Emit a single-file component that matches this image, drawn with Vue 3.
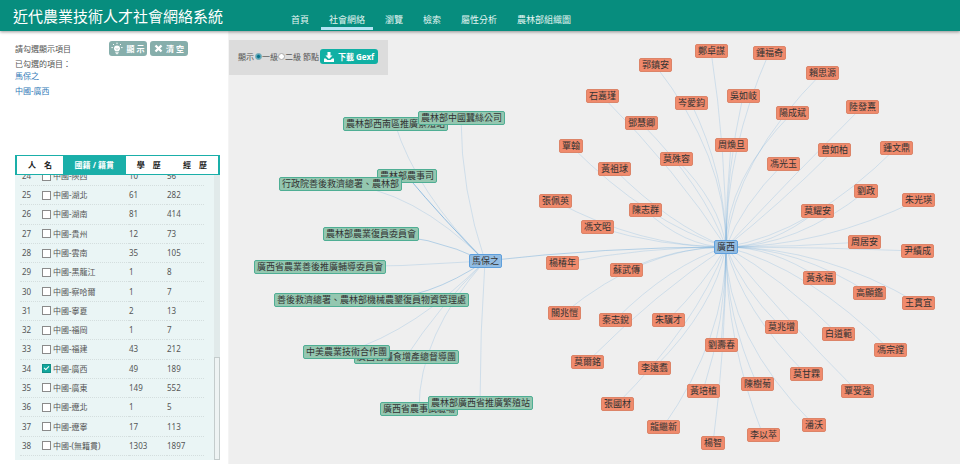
<script setup>
import { ref } from 'vue'

const navItems = ['首頁', '社會網絡', '瀏覽', '檢索', '屬性分析', '農林部組織圖']
const activeNav = ref('社會網絡')

const tabs = ['人　名', '國籍 / 籍貫', '學　歷', '經　歷']
const activeTab = ref('國籍 / 籍貫')

const level = ref('1')
const chosen = ref(['馬保之', '中國-廣西'])

const rows = ref([
  [24, '中國-陝西', 10, 56],
  [25, '中國-湖北', 61, 282],
  [26, '中國-湖南', 81, 414],
  [27, '中國-貴州', 12, 73],
  [28, '中國-雲南', 35, 105],
  [29, '中國-黑龍江', 1, 8],
  [30, '中國-察哈爾', 1, 7],
  [31, '中國-寧夏', 2, 13],
  [32, '中國-福岡', 1, 7],
  [33, '中國-福建', 43, 212],
  [34, '中國-廣西', 49, 189],
  [35, '中國-廣東', 149, 552],
  [36, '中國-遼北', 1, 5],
  [37, '中國-遼寧', 17, 113],
  [38, '中國-(無籍貫)', 1303, 1897]
].map(([id, name, people, links]) => ({ id, name, people, links, checked: id === 34 })))

// Graph nodes: label, centre x, centre y
const person = { label: '馬保之', x: 256, y: 230, kind: 'hub' }
const place = { label: '廣西', x: 497, y: 216, kind: 'hub' }

const orgs = [
  ['農林部西南區推廣繁殖站', 166, 93],
  ['農林部中國蠶絲公司', 232, 87],
  ['農林部農事司', 178, 145, 3],
  ['行政院善後救濟總署、農林部', 111, 153],
  ['農林部農業復員委員會', 142, 203, 2],
  ['廣西省農業善後推廣輔導委員會', 91, 236],
  ['善後救濟總署、農林部機械農墾復員物資管理處', 142, 269, 2],
  ['廣西省糧食增產總督導團', 177, 326],
  ['中美農業技術合作團', 117, 321],
  ['廣西省農事試驗場', 190, 378],
  ['農林部廣西省推廣繁殖站', 251, 372]
].map(([label, x, y, weight = 1]) => ({ label, x, y, weight, kind: 'org' }))

const people = [
  ['鄭卓謀', 482, 20], ['郭鎮安', 426, 34], ['石嘉瑾', 373, 65], ['岑愛鈞', 462, 72],
  ['吳如岐', 514, 65], ['鄧慧卿', 412, 92], ['覃翰', 342, 115], ['莫殊容', 447, 128],
  ['黃祖球', 385, 138], ['周煥旦', 502, 114], ['張佩英', 326, 170], ['陳志群', 416, 179],
  ['鍾福奇', 540, 22], ['賴思源', 593, 42], ['陽成斌', 563, 82], ['陸發熹', 633, 76],
  ['曾如柏', 605, 119], ['鍾文鼎', 667, 117], ['馮光玉', 554, 133], ['劉政', 637, 160],
  ['朱光瑛', 689, 169], ['莫耀安', 588, 180], ['馮文昭', 368, 196], ['楊椿年', 333, 232],
  ['蘇武傳', 397, 239], ['關兆愷', 335, 282], ['秦志銳', 386, 289], ['朱驥才', 439, 289],
  ['周居安', 635, 211], ['尹績成', 688, 220], ['黃永福', 590, 247], ['高顯鑑', 640, 262],
  ['王貫宜', 689, 272], ['莫兆增', 552, 296], ['莫爾銘', 358, 331], ['李遠翥', 425, 337],
  ['劉壽春', 492, 314], ['黃培植', 474, 360], ['張國材', 388, 373], ['龍繼新', 434, 396],
  ['楊智', 484, 412], ['白道範', 609, 303], ['馮宗鏜', 661, 319], ['莫甘霖', 577, 343],
  ['陳樹菊', 528, 353], ['覃受強', 628, 360], ['潘沃', 585, 394], ['李以萃', 534, 404]
].map(([label, x, y]) => ({ label, x, y, kind: 'person' }))

const nodes = [...orgs, ...people, person, place]

// Quadratic curve that leaves the source on the diagonal and is clamped to the target's axis
function curve(from, to) {
  const dx = to.x - from.x
  const dy = to.y - from.y
  const w = Math.abs(dx)
  const h = Math.abs(dy)
  const step = Math.max(w, h) / 2
  const vx = w <= h ? from.x + Math.sign(dx) * Math.min(step, w) : from.x + dx / 2
  const vy = w <= h ? from.y + dy / 2 : from.y + Math.sign(dy) * Math.min(step, h)
  return `M${from.x} ${from.y}Q${vx} ${vy} ${to.x} ${to.y}`
}

const edges = [
  ...orgs.map(o => ({ d: curve(person, o), weight: o.weight })),
  ...people.map(p => ({ d: curve(p, place), weight: 1 })),
  { d: curve(person, place), weight: 2 }
]

function box(node) {
  const width = node.label.length * 9 + 6
  return {
    left: Math.round(node.x - width / 2) + 'px',
    top: node.y - 7 + 'px',
    width: width + 'px'
  }
}

function clearAll() {
  chosen.value = []
  rows.value.forEach(r => { r.checked = false })
}
</script>

<template>
  <div class="page">
    <header class="top">
      <h1>近代農業技術人才社會網絡系統</h1>
      <nav>
        <a
          v-for="item in navItems"
          :key="item"
          href="#"
          :class="{ active: item === activeNav }"
          @click.prevent="activeNav = item"
        >{{ item }}</a>
      </nav>
    </header>

    <div class="body">
      <aside>
        <div class="picker">
          <div class="picker-head">
            <span>請勾選顯示項目</span>
            <div class="actions">
              <button type="button" class="soft">
                <svg width="12" height="13" viewBox="0 0 12 13">
                  <path d="M6 3.400a3 3 0 0 0-3 3c0 1.300.7 1.800 1.200 2.700h3.600C8.300 8.200 9 7.700 9 6.400a3 3 0 0 0-3-3z" fill="#fff" />
                  <path d="M4.300 10.200h3.400M4.800 11.700h2.400" stroke="#fff" stroke-width="1" />
                  <path d="M6 .6v1.500M2 2l1.100 1.100M10 2 8.900 3.100M.4 5.600h1.500M10.100 5.600h1.500" stroke="#fff" stroke-width="1" />
                  <path d="M4.800 6.300 6 7.500l1.200-1.200" fill="none" stroke="#86aeab" stroke-width=".7" />
                </svg>
                <span>顯 示</span>
              </button>
              <button type="button" class="soft" @click="clearAll">
                <svg width="9" height="9" viewBox="0 0 9 9">
                  <path d="M1.500 1.500l6 6M7.500 1.500l-6 6" stroke="#fff" stroke-width="2.400" />
                </svg>
                <span>清 空</span>
              </button>
            </div>
          </div>
          <p>已勾選的項目：</p>
          <ul>
            <li v-for="c in chosen" :key="c"><a href="#">{{ c }}</a></li>
          </ul>
        </div>

        <div class="tabs">
          <button
            v-for="t in tabs"
            :key="t"
            type="button"
            :class="{ on: t === activeTab }"
            @click="activeTab = t"
          >{{ t }}</button>
        </div>

        <div class="list">
          <div class="rows">
            <table>
              <tbody>
                <tr v-for="r in rows" :key="r.id">
                  <td class="num">{{ r.id }}</td>
                  <td class="name">
                    <label><input v-model="r.checked" type="checkbox">{{ r.name }}</label>
                  </td>
                  <td class="count">{{ r.people }}</td>
                  <td>{{ r.links }}</td>
                </tr>
              </tbody>
            </table>
          </div>
          <div class="track"><div class="thumb"></div></div>
        </div>
      </aside>

      <main>
        <div class="toolbar">
          <span class="lead">顯示</span>
          <label><input v-model="level" type="radio" name="level" value="1">一級</label>
          <label><input v-model="level" type="radio" name="level" value="2">二級 節點</label>
          <button type="button" class="download">
            <svg width="10" height="10" viewBox="0 0 10 10">
              <path d="M3.500 0h3v3.500h2L5 7 1.500 3.500h2z" fill="#fff" />
              <path d="M0 6.500h1.800L3.500 8h3l1.700-1.500H10V10H0z" fill="#fff" />
            </svg>
            <span>下載 Gexf</span>
          </button>
        </div>
        <div class="graph">
          <svg class="edges" width="100%" height="100%">
            <path v-for="(e, i) in edges" :key="i" :d="e.d" :class="'w' + e.weight" />
          </svg>
          <div v-for="n in nodes" :key="n.label" class="node" :class="n.kind" :style="box(n)">{{ n.label }}</div>
        </div>
      </main>
    </div>
  </div>
</template>

<style>
body {
  margin: 0;
}
</style>

<style scoped>
.page {
  display: flex;
  flex-direction: column;
  height: 100vh;
  font: 8px/12px "Noto Sans", "Noto Sans CJK TC", sans-serif;
  color: #555;
  background: #fff;
}

button {
  font: inherit;
  border: 0;
  padding: 0;
  cursor: pointer;
}

a {
  text-decoration: none;
}

.top {
  position: relative;
  z-index: 2;
  flex: none;
  display: flex;
  height: 31px;
  padding-left: 13px;
  background: #078d7e;
  box-shadow: 0 1px 3px rgba(0, 0, 0, 0.4);
}

h1 {
  margin: 0;
  width: 270px;
  font: 400 15px/32px "Noto Sans CJK TC", sans-serif;
  color: #fff;
}

nav {
  display: flex;
  gap: 4px;
}

nav a {
  box-sizing: border-box;
  height: 30px;
  padding: 12px 8px 0;
  border-bottom: 3px solid transparent;
  font: 9px/15px "Noto Sans CJK TC", sans-serif;
  color: #e3f5f2;
}

nav a.active {
  border-bottom-color: #b4e4f4;
}

.body {
  flex: 1;
  display: flex;
  min-height: 0;
}

aside {
  flex: none;
  box-sizing: border-box;
  display: flex;
  flex-direction: column;
  width: 229px;
  padding: 10px 8px 4px 15px;
  border-right: 1px solid #f4f4f4;
}

.picker {
  height: 114px;
}

.picker-head {
  display: flex;
  align-items: center;
  justify-content: space-between;
  padding-right: 32px;
}

.actions {
  display: flex;
  gap: 3px;
}

.soft {
  display: flex;
  align-items: center;
  justify-content: center;
  gap: 3px;
  width: 38px;
  height: 15px;
  border-radius: 3px;
  background: #86aeab;
  color: #fff;
  font-weight: 700;
}

.picker p {
  margin: 2px 0 0;
}

ul {
  display: grid;
  gap: 3px;
  margin: 0;
  padding: 0;
  list-style: none;
}

li a {
  color: #337ab7;
}

.tabs {
  display: grid;
  grid-template-columns: 46px 62px 46px 46px;
  justify-content: space-between;
  padding: 1px 2px;
  background: #1aafa9;
}

.tabs button {
  height: 18px;
  background: #fff;
  color: #222;
  font-weight: 700;
}

.tabs button.on {
  background: #1aafa9;
  color: #fff;
}

.list {
  flex: 1;
  display: flex;
  min-height: 0;
  background: #eaf5f5;
}

.rows {
  flex: 1;
  display: flex;
  flex-direction: column;
  justify-content: flex-end;
  overflow: hidden;
  padding: 0 10px 4px 5px;
}

table {
  flex: none;
  height: 289px;
  border-collapse: collapse;
}

td {
  padding: 0;
  border-bottom: 1px dotted #d4dede;
}

.num {
  width: 22px;
  padding-left: 2px;
}

.name {
  width: 85px;
}

.count {
  width: 38px;
}

label {
  display: flex;
  align-items: center;
}

.name label {
  gap: 2px;
}

input {
  flex: none;
  box-sizing: border-box;
  appearance: none;
  margin: 0;
  background: #fff;
}

input[type="checkbox"] {
  display: grid;
  place-items: center;
  width: 9px;
  height: 9px;
  margin-left: -2px;
  border: 1px solid #8a8a8a;
}

input[type="checkbox"]:checked {
  border-color: #128f86;
  background: #12a79d;
}

input[type="checkbox"]:checked::after {
  content: "";
  width: 4px;
  height: 2px;
  margin-bottom: 2px;
  border: solid #fff;
  border-width: 0 0 1px 1px;
  transform: rotate(-45deg);
}

.track {
  display: flex;
  flex-direction: column;
  justify-content: flex-end;
  width: 6px;
  background: #e1eaea;
}

.thumb {
  box-sizing: border-box;
  height: 103px;
  border: 1px solid #c4cccc;
  background: #eef3f3;
}

main {
  flex: 1;
  position: relative;
  min-width: 0;
  background: #efefef;
}

.toolbar {
  position: absolute;
  z-index: 1;
  top: 9px;
  left: 0;
  box-sizing: border-box;
  display: flex;
  align-items: center;
  height: 35px;
  padding: 0 10px 2px 9px;
  background: #dcdcdc;
}

.lead {
  margin-right: 1px;
}

input[type="radio"] {
  width: 7px;
  height: 7px;
  border: 1px solid #aaa;
  border-radius: 50%;
}

input[type="radio"]:checked {
  border-color: #6aa5b3;
  background: radial-gradient(circle, #08718a 1px, #8fcbd8 3px);
}

.download {
  display: flex;
  align-items: center;
  justify-content: center;
  gap: 4px;
  width: 58px;
  height: 15px;
  margin-left: 1px;
  border-radius: 3px;
  background: #10b0a4;
  color: #fff;
  font-weight: 700;
}

.graph {
  position: relative;
  height: 100%;
  overflow: hidden;
}

.edges {
  display: block;
}

.edges path {
  fill: none;
  stroke: #5a9fd8;
  stroke-opacity: 0.28;
  stroke-width: 0.8;
}

.edges .w2 {
  stroke-opacity: 0.5;
}

.edges .w3 {
  stroke-opacity: 0.8;
}

.node {
  position: absolute;
  box-sizing: border-box;
  height: 14px;
  border: 1px solid;
  border-radius: 2px;
  font: 9px/11px "Noto Sans CJK TC", sans-serif;
  text-align: center;
  white-space: nowrap;
  color: #333;
}

.person {
  background: #f08a6c;
  border-color: #dc8468;
}

.org {
  background: #94c7b0;
  border-color: #4fae94;
}

.hub {
  background: #92bce2;
  border-color: #5e9fdc;
}
</style>
